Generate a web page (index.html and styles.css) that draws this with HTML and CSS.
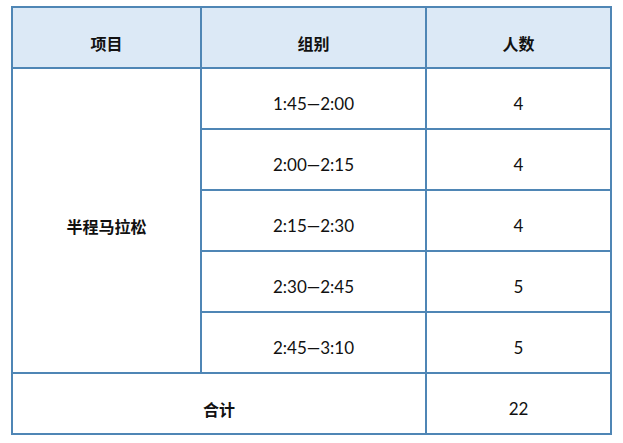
FILE: index.html
```html
<!DOCTYPE html>
<html lang="zh">
<head>
<meta charset="utf-8">
<link rel="stylesheet" href="styles.css">
</head>
<body>
<table class="tbl">
  <colgroup>
    <col class="c1"><col class="c2"><col class="c3">
  </colgroup>
  <thead>
    <tr class="head">
      <th>项目</th>
      <th>组别</th>
      <th>人数</th>
    </tr>
  </thead>
  <tbody>
    <tr>
      <td rowspan="5" class="bold">半程马拉松</td>
      <td>1:45—2:00</td>
      <td>4</td>
    </tr>
    <tr><td>2:00—2:15</td><td>4</td></tr>
    <tr><td>2:15—2:30</td><td>4</td></tr>
    <tr><td>2:30—2:45</td><td>5</td></tr>
    <tr><td>2:45—3:10</td><td>5</td></tr>
    <tr>
      <td colspan="2" class="bold">合计</td>
      <td>22</td>
    </tr>
  </tbody>
</table>
</body>
</html>
```
FILE: styles.css
```css
html, body {
  margin: 0;
  padding: 0;
  background: #ffffff;
}
body {
  padding: 6px 0 0 11px;
  font-family: Lato, "Noto Sans CJK SC", sans-serif;
  color: #111;
}
.tbl {
  border-collapse: collapse;
  table-layout: fixed;
  width: 599px;
}
.c1 { width: 189px; }
.c2 { width: 225px; }
.c3 { width: 185px; }
.tbl th, .tbl td {
  border: 2px solid #4f86b5;
  text-align: center;
  vertical-align: middle;
  height: 49px;
  padding: 10px 0 0;
  font-size: 17px;
  font-weight: 400;
}
.tbl th {
  background: #dce9f6;
  font-family: "Noto Sans CJK SC", sans-serif;
  font-weight: 700;
  font-size: 16px;
}
.tbl td.bold {
  font-family: "Noto Sans CJK SC", sans-serif;
  font-weight: 700;
  font-size: 16px;
}
```
